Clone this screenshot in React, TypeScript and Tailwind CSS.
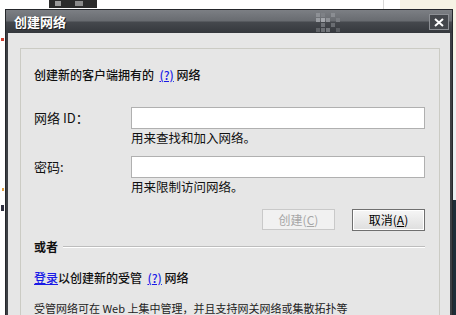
import React from "react";

const font = { fontFamily: '"Noto Sans CJK SC", "Liberation Sans", sans-serif' };

function TitlePattern() {
  const cells: [number, number, string][] = [
    [0, 0, "#8d9095"], [5, 0, "#7e8186"], [15, 0, "#8a8d92"],
    [0, 5, "#9a9da2"], [5, 5, "#a5a8ad"], [10, 5, "#8e9196"], [20, 5, "#7b7e83"],
    [5, 10, "#6f7277"], [15, 10, "#6a6d72"],
    [0, 15, "#5f6267"], [5, 15, "#6c6f74"], [10, 15, "#74777c"], [20, 15, "#5a5d62"],
  ];
  return (
    <svg width="26" height="20" viewBox="0 0 26 20" className="absolute left-[310px] top-[3px]">
      {cells.map(([x, y, c], i) => (
        <rect key={i} x={x} y={y} width="4" height="4" fill={c} />
      ))}
    </svg>
  );
}

export default function App() {
  return (
    <div className="relative w-[456px] h-[315px] overflow-hidden bg-white" style={font}>
      {/* background bits */}
      <div className="absolute left-[49px] top-0 w-[48px] h-[8px] bg-[#2b2b2b]" />
      <div className="absolute left-[55px] top-[1px] w-[6px] h-[5px] bg-[#9a9a9a]" />
      <div className="absolute left-[75px] top-[1px] w-[8px] h-[5px] bg-[#8a8a8a]" />
      <div className="absolute left-[400px] top-0 w-[56px] h-[60px] bg-[#f6f3e4]" />
      <div className="absolute left-[383px] top-0 w-[1px] h-[9px] bg-[#d8d8d8]" />
      <div className="absolute left-[452px] top-[60px] w-[4px] h-[140px] bg-[#e8eef2]" />
      <div className="absolute left-[452px] top-[200px] w-[4px] h-[115px] bg-[#1d2d38]" />
      <div className="absolute left-[1px] top-[38px] w-[3px] h-[3px] bg-[#d04030]" />
      <div className="absolute left-[2px] top-[188px] w-[2px] h-[3px] bg-[#e0a040]" />
      <div className="absolute left-[1px] top-[205px] w-[3px] h-[6px] bg-[#303040]" />

      {/* dialog */}
      <div className="relative z-10 ml-[5px] mt-[9px] w-[448px] h-[320px] flex flex-col border border-[#25272b] bg-[#3c3f44]">
        <div className="relative h-[23px] shrink-0 flex items-center bg-[linear-gradient(to_bottom,#7c7f84_0%,#686b70_48%,#45484d_52%,#35383d_100%)]">
          <span
            className="pl-[8px] text-[13px] font-bold text-white leading-none"
            style={{ textShadow: "1px 1px 0 #222" }}
          >
            创建网络
          </span>
          <TitlePattern />
          <div className="absolute right-[3px] top-[4px] w-[20px] h-[16px] border border-[#8c8f94] bg-[#44474c] flex items-center justify-center">
            <svg width="10" height="9" viewBox="0 0 10 9">
              <path d="M1 1 L9 8 M9 1 L1 8" stroke="white" strokeWidth="2" />
            </svg>
          </div>
        </div>
        <div className="flex-1 ml-[2px] mr-[2px] bg-[#e6e6e6] pt-[15px] pl-[12px] pr-[10px]">
          <div className="h-[300px] border border-[#cbcbc4] pl-[13px] pr-[13px] text-[12px] text-[#111]">
            <div className="mt-[18px] h-[16px] leading-[16px] font-medium">
              创建新的客户端拥有的&nbsp; <span className="text-[#1a1ae6] underline">(?)</span> 网络
            </div>

            <div className="mt-[24px] flex items-center">
              <div className="w-[97px] text-[13px]">网络 ID：</div>
              <div className="w-[294px] h-[22px] bg-white border border-[#b0b0b0]" />
            </div>
            <div className="ml-[97px] mt-[1px] h-[16px] leading-[16px] text-[12.5px]">用来查找和加入网络。</div>

            <div className="mt-[10px] flex items-center">
              <div className="w-[97px] text-[13px]">密码:</div>
              <div className="w-[294px] h-[22px] bg-white border border-[#b0b0b0]" />
            </div>
            <div className="ml-[97px] mt-[1px] h-[16px] leading-[16px] text-[12.5px]">用来限制访问网络。</div>

            <div className="mt-[14px] flex justify-end gap-[17px] pr-[1px]">
              <div className="w-[73px] h-[21px] border border-[#c9c9c9] bg-[#f1f1f1] text-[#a6a6a6] flex items-center justify-center">
                创建(<span className="underline">C</span>)
              </div>
              <div className="w-[73px] h-[22px] border border-[#6f6f6f] bg-[linear-gradient(to_bottom,#f6f6f6,#dedede)] text-black flex items-center justify-center shadow-[inset_0_0_0_1px_#ffffff]">
                取消(<span className="underline">A</span>)
              </div>
            </div>

            <div className="mt-[8px] h-[16px] flex items-center">
              <span className="font-bold text-[12px] leading-[16px]">或者</span>
              <div className="ml-[5px] flex-1 mr-[1px] border-t border-[#bdbdbd] border-b border-b-white" />
            </div>

            <div className="mt-[15px] h-[16px] leading-[16px] font-medium">
              <span className="text-[#1a1ae6] underline">登录</span>以创建新的受管&nbsp; <span className="text-[#1a1ae6] underline">(?)</span> 网络
            </div>

            <div className="mt-[14px] h-[16px] leading-[16px] text-[11px] text-[#222]">
              受管网络可在 Web 上集中管理，并且支持网关网络或集散拓扑等
            </div>
          </div>
        </div>
      </div>
    </div>
  );
}
